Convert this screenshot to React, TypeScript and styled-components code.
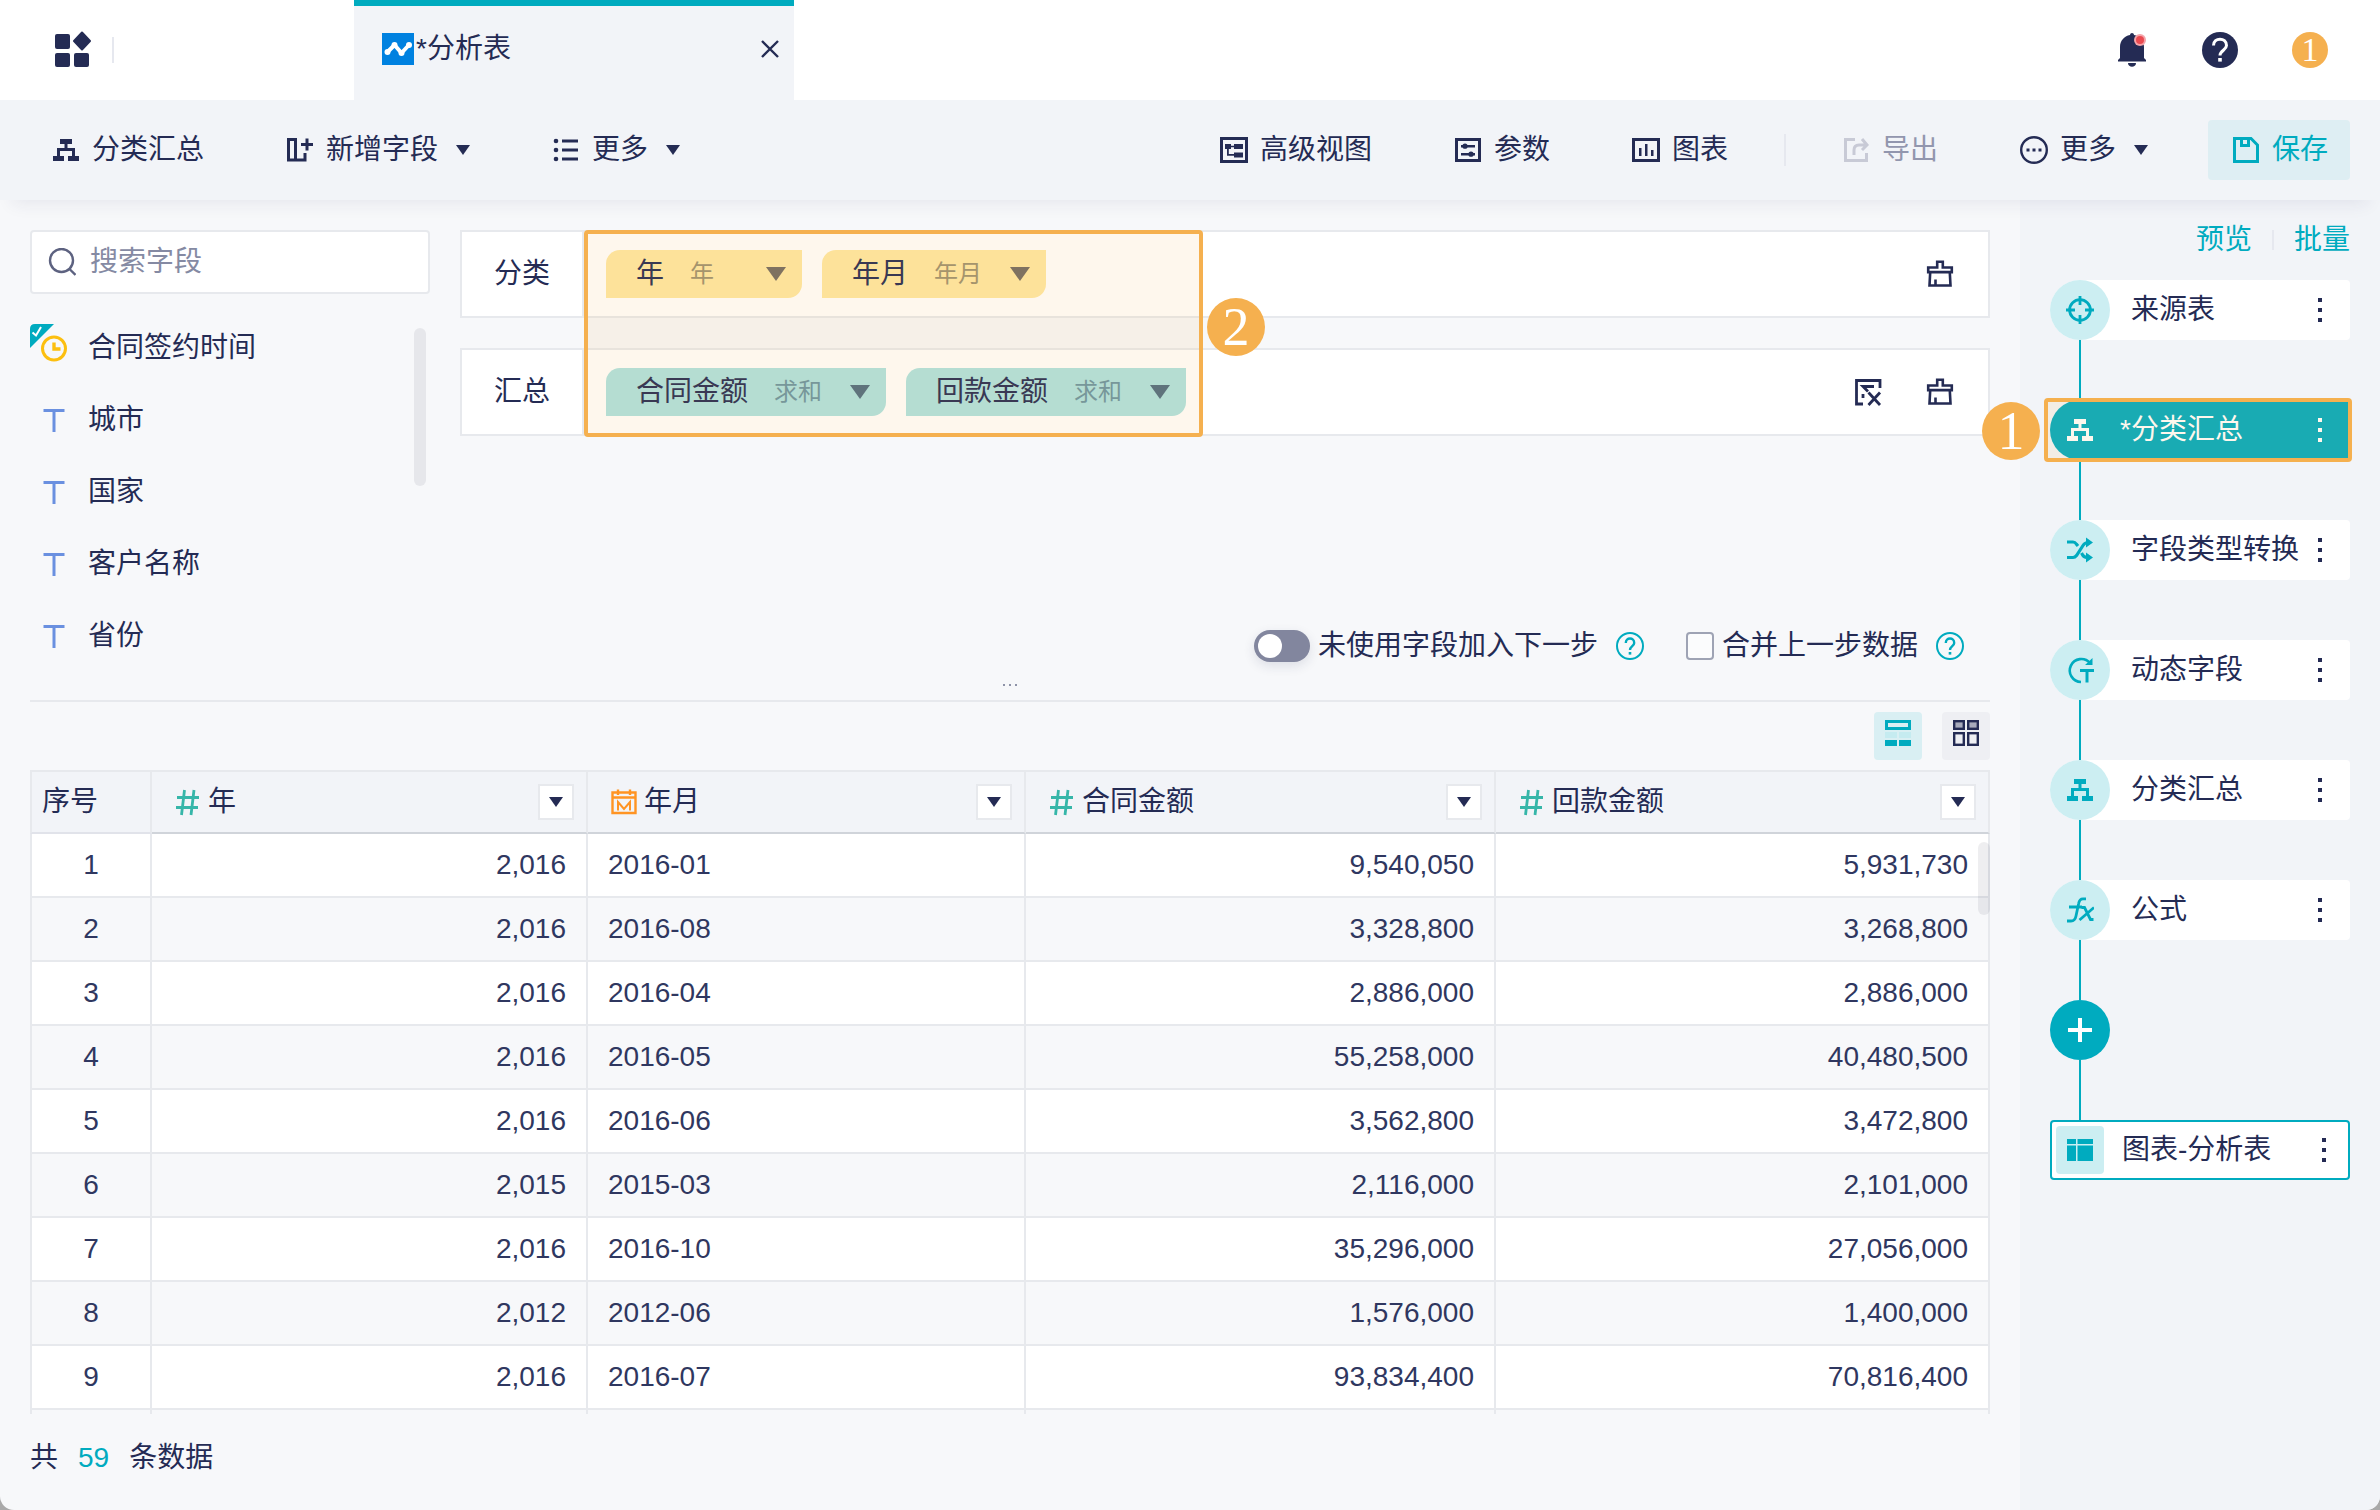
import React from 'react';
import styled, { createGlobalStyle, css } from 'styled-components';

const c = {
  ink: '#242b54',
  inkSoft: '#2f3760',
  muted: '#858aa3',
  teal: '#00abbf',
  tealPale: '#cceef2',
  tealWash: '#deeef3',
  line: '#e7e9ed',
  lineStrong: '#d0d4da',
  panel: '#f2f4f8',
  page: '#f7f8fa',
  orange: '#f5b04f',
};

const GlobalStyle = createGlobalStyle`
  *, *::before, *::after { box-sizing: border-box; }
  html, body { margin: 0; background: #a9a9a9; }
  body, button, input {
    font-family: "Liberation Sans", "Noto Sans CJK SC", sans-serif;
    font-size: 28px;
    line-height: 40px;
    font-weight: 400;
    color: ${c.ink};
  }
  button { border: 0; padding: 0; background: none; cursor: pointer; }
  svg { display: block; flex: none; }
`;

/* ---------- shell ---------- */

const Shell = styled.div`
  display: flex;
  flex-direction: column;
  height: 100vh;
  overflow: hidden;
  background: ${c.page};
  border-radius: 0 0 14px 14px;
`;

const Header = styled.header`
  display: flex;
  align-items: center;
  flex: none;
  height: 100px;
  padding: 0 52px;
  background: #fff;
`;

const HomeArea = styled.div`
  display: flex;
  align-items: center;
  gap: 20px;
  width: 302px;
`;

const Separator = styled.span<{ $height: number }>`
  flex: none;
  width: 2px;
  height: ${(p) => p.$height}px;
  background: #e6e8ef;
`;

const Tab = styled.div`
  display: flex;
  align-items: center;
  gap: 2px;
  width: 440px;
  height: 100px;
  padding: 0 14px 8px 28px;
  border-top: 6px solid ${c.teal};
  background: ${c.panel};
`;

const TabTitle = styled.span`
  flex: 1;
`;

const HeaderActions = styled.div`
  display: flex;
  align-items: center;
  gap: 54px;
  margin-left: auto;
`;

const IconButton = styled.button`
  display: flex;
  align-items: center;
  justify-content: center;
`;

const NumberBadge = styled.span<{ $size: number; $font: number }>`
  display: flex;
  align-items: center;
  justify-content: center;
  width: ${(p) => p.$size}px;
  height: ${(p) => p.$size}px;
  border-radius: 50%;
  background: ${c.orange};
  color: #fff;
  font-family: "Liberation Serif", serif;
  font-size: ${(p) => p.$font}px;
  line-height: ${(p) => p.$size}px;
`;

/* ---------- toolbar ---------- */

const Toolbar = styled.nav`
  position: relative;
  z-index: 1;
  display: flex;
  align-items: center;
  justify-content: space-between;
  flex: none;
  height: 100px;
  padding: 0 30px 0 52px;
  background: ${c.panel};
  box-shadow: 0 16px 16px -12px rgba(36, 43, 84, 0.08);
`;

const ToolGroup = styled.div`
  display: flex;
  align-items: center;
  gap: 82px;
`;

const ToolRight = styled.div`
  display: flex;
  align-items: center;
  gap: 56px;
`;

const ToolButton = styled.button<{ $disabled?: boolean }>`
  display: flex;
  align-items: center;
  gap: 12px;
  color: ${(p) => (p.$disabled ? '#9296ae' : c.ink)};
  svg { color: ${(p) => (p.$disabled ? '#c8cad6' : 'inherit')}; }
`;

const Caret = styled.span<{ $size?: 'small' | 'large'; $pushed?: boolean }>`
  flex: none;
  width: 0;
  height: 0;
  border-style: solid;
  border-color: currentColor transparent transparent;
  border-width: ${(p) => (p.$size === 'large' ? '14px 10px 0' : '10px 7px 0')};
  margin-left: ${(p) => (p.$pushed ? '6px' : '0')};
`;

const SaveButton = styled(ToolButton)`
  width: 142px;
  height: 60px;
  margin-left: 4px;
  padding-left: 24px;
  border-radius: 4px;
  background: ${c.tealWash};
  color: ${c.teal};
`;

/* ---------- workspace ---------- */

const Workspace = styled.div`
  display: flex;
  flex: 1;
  min-height: 0;
`;

const Main = styled.main`
  display: flex;
  flex-direction: column;
  flex: 1;
  min-width: 0;
  padding: 30px 30px 0;
`;

const Config = styled.section`
  display: flex;
  gap: 30px;
  height: 440px;
`;

const Fields = styled.aside`
  flex: none;
  width: 400px;
`;

const SearchBox = styled.label`
  display: flex;
  align-items: center;
  gap: 14px;
  height: 64px;
  padding: 0 16px;
  border: 2px solid ${c.line};
  border-radius: 4px;
  background: #fff;
  color: #5d6280;
`;

const SearchInput = styled.input`
  flex: 1;
  min-width: 0;
  padding: 0;
  border: 0;
  outline: 0;
  background: none;
  &::placeholder { color: ${c.muted}; opacity: 1; }
`;

const FieldList = styled.ul`
  position: relative;
  margin: 18px 0 0;
  padding: 0;
  list-style: none;
`;

const FieldItem = styled.li`
  position: relative;
  display: flex;
  align-items: center;
  gap: 10px;
  height: 72px;
`;

const UsedMark = styled.span`
  position: absolute;
  left: 0;
  top: 12px;
`;

const ScrollThumb = styled.span<{ $top: number; $height: number; $right: number }>`
  position: absolute;
  top: ${(p) => p.$top}px;
  right: ${(p) => p.$right}px;
  width: 12px;
  height: ${(p) => p.$height}px;
  border-radius: 6px;
  background: rgba(36, 43, 60, 0.08);
`;

const Grouping = styled.div`
  position: relative;
  display: flex;
  flex-direction: column;
  gap: 30px;
  flex: 1;
  min-width: 0;
`;

const GroupRow = styled.div`
  display: flex;
  height: 88px;
  border: 2px solid ${c.line};
  background: #fff;
`;

const GroupLabel = styled.span`
  display: flex;
  align-items: center;
  justify-content: center;
  width: 122px;
  border-right: 2px solid ${c.line};
`;

const Pills = styled.div`
  display: flex;
  align-items: center;
  gap: 20px;
  flex: 1;
  padding-left: 22px;
`;

const Pill = styled.button<{ $tone: 'yellow' | 'green' }>`
  display: flex;
  align-items: center;
  min-width: 196px;
  height: 48px;
  padding: 0 16px 0 30px;
  border-radius: 14px 0 14px 0;
  background: ${(p) => (p.$tone === 'yellow' ? '#fee8a3' : '#aee3e1')};
`;

const PillNote = styled.span<{ $tone: 'yellow' | 'green' }>`
  flex: 1;
  margin: 0 28px 0 26px;
  font-size: 24px;
  text-align: left;
  color: ${(p) => (p.$tone === 'yellow' ? '#9c9170' : '#6995a3')};
`;

const PillCaret = styled(Caret)<{ $tone: 'yellow' | 'green' }>`
  color: ${(p) => (p.$tone === 'yellow' ? '#726b63' : '#4e6c82')};
`;

const RowTools = styled.div`
  display: flex;
  align-items: center;
  gap: 44px;
  padding-right: 34px;
`;

const Outline = styled.div`
  position: absolute;
  border: 4px solid ${c.orange};
  border-radius: 4px;
  background: rgba(245, 176, 79, 0.1);
  pointer-events: none;
`;

const GroupOutline = styled(Outline)`
  left: 124px;
  top: 0;
  width: 619px;
  height: 207px;
`;

const GroupCallout = styled.div`
  position: absolute;
  left: 747px;
  top: 68px;
`;

const Options = styled.div`
  display: flex;
  align-items: center;
  justify-content: flex-end;
  gap: 42px;
  height: 48px;
  margin-top: auto;
  padding-right: 26px;
`;

const Option = styled.div`
  display: flex;
  align-items: center;
  gap: 18px;
`;

const OptionLabel = styled.label`
  display: flex;
  align-items: center;
  gap: 8px;
`;

const Switch = styled.input`
  appearance: none;
  width: 56px;
  height: 32px;
  margin: 0;
  padding: 4px;
  border-radius: 16px;
  background: #82869e;
  box-shadow: 0 4px 12px rgba(36, 43, 84, 0.12);
  &::before {
    content: "";
    display: block;
    width: 24px;
    height: 24px;
    border-radius: 50%;
    background: #fff;
  }
  &:checked { background: ${c.teal}; }
  &:checked::before { margin-left: 24px; }
`;

const TickBox = styled.input`
  appearance: none;
  width: 28px;
  height: 28px;
  margin: 0;
  border: 2px solid #9ea3b4;
  border-radius: 4px;
  background: #fbfcfd;
  &:checked { background: ${c.teal}; }
`;

const Splitter = styled.div`
  display: flex;
  align-items: center;
  justify-content: center;
  flex: none;
  gap: 4px;
  height: 32px;
  border-bottom: 2px solid ${c.line};
`;

const GripDot = styled.span`
  width: 2px;
  height: 2px;
  background: #8e93a8;
`;

const ViewSwitch = styled.div`
  display: flex;
  justify-content: flex-end;
  flex: none;
  gap: 20px;
  padding: 10px 0;
`;

const ViewButton = styled.button<{ $active?: boolean }>`
  display: flex;
  justify-content: center;
  width: 48px;
  height: 48px;
  padding-top: 8px;
  border-radius: 4px;
  background: ${(p) => (p.$active ? '#d9eff3' : '#eeeff3')};
  color: ${(p) => (p.$active ? c.teal : c.ink)};
`;

/* ---------- table ---------- */

const TableFrame = styled.div`
  position: relative;
  flex: 1;
  min-height: 0;
  overflow: hidden;
`;

const Table = styled.table`
  width: 100%;
  table-layout: fixed;
  border-collapse: separate;
  border-spacing: 0;
`;

const Col = styled.col<{ $width?: number }>`
  width: ${(p) => (p.$width ? `${p.$width}px` : 'auto')};
`;

const edge = css`
  border-right: 2px solid ${c.line};
  &:first-child { border-left: 2px solid ${c.line}; }
`;

const HeadCell = styled.th`
  ${edge}
  height: 64px;
  padding: 0 12px 0 22px;
  border-top: 2px solid ${c.line};
  border-bottom: 2px solid ${c.lineStrong};
  background: ${c.panel};
  font-weight: 400;
  text-align: left;
  &:first-child { padding: 0 0 0 10px; border-bottom-color: #e1e3ea; }
`;

const HeadContent = styled.div`
  display: flex;
  align-items: center;
  gap: 6px;
`;

const HeadLabel = styled.span`
  flex: 1;
`;

const FilterButton = styled.button`
  display: flex;
  align-items: center;
  justify-content: center;
  width: 36px;
  height: 36px;
  border: 2px solid ${c.line};
  background: #fff;
`;

const Row = styled.tr`
  background: #fff;
  &:nth-child(even) { background: ${c.page}; }
`;

const Cell = styled.td<{ $align: 'left' | 'center' | 'right' }>`
  ${edge}
  height: 64px;
  padding: 0 20px;
  border-bottom: 2px solid ${c.line};
  color: ${c.inkSoft};
  text-align: ${(p) => p.$align};
`;

const Footer = styled.footer`
  display: flex;
  flex: none;
  gap: 20px;
  height: 96px;
  padding-top: 24px;
`;

const Total = styled.span`
  color: ${c.teal};
`;

/* ---------- steps ---------- */

const StepPanel = styled.aside`
  flex: none;
  width: 360px;
  padding: 20px 30px 0;
  background: ${c.panel};
`;

const StepLinks = styled.div`
  display: flex;
  align-items: center;
  justify-content: flex-end;
  gap: 20px;
  height: 40px;
  margin-bottom: 20px;
`;

const StepLink = styled.a`
  color: ${c.teal};
  text-decoration: none;
`;

const StepList = styled.ol`
  margin: 0;
  padding: 0;
  list-style: none;
`;

const StepItem = styled.li`
  & + &::before {
    content: "";
    display: block;
    width: 2px;
    height: 60px;
    margin-left: 29px;
    background: ${c.teal};
  }
`;

const StepCard = styled.div<{ $active?: boolean }>`
  position: relative;
  display: flex;
  align-items: center;
  height: 60px;
  padding-right: 16px;
  border-radius: 30px 4px 4px 30px;
  background: ${(p) => (p.$active ? c.teal : '#fff')};
  color: ${(p) => (p.$active ? '#fff' : c.ink)};
`;

const StepIcon = styled.span<{ $active?: boolean }>`
  display: flex;
  align-items: center;
  justify-content: center;
  flex: none;
  width: 60px;
  height: 60px;
  border-radius: 50%;
  background: ${(p) => (p.$active ? 'none' : c.tealPale)};
  color: ${(p) => (p.$active ? '#fff' : c.teal)};
`;

const StepName = styled.span<{ $inset: number }>`
  flex: 1;
  padding-left: ${(p) => p.$inset}px;
  white-space: nowrap;
`;

const MoreButton = styled.button`
  display: flex;
  flex-direction: column;
  align-items: center;
  justify-content: center;
  gap: 6px;
  width: 28px;
  height: 40px;
  color: inherit;
`;

const MoreDot = styled.span`
  width: 4px;
  height: 4px;
  background: currentColor;
`;

const AddButton = styled.button`
  display: flex;
  align-items: center;
  justify-content: center;
  width: 60px;
  height: 60px;
  border-radius: 50%;
  background: ${c.teal};
  color: #fff;
`;

const ResultCard = styled.div`
  display: flex;
  align-items: center;
  height: 60px;
  padding: 0 10px 0 4px;
  border: 2px solid ${c.teal};
  border-radius: 4px;
  background: #fff;
`;

const ResultIcon = styled.span`
  display: flex;
  align-items: center;
  justify-content: center;
  width: 48px;
  height: 48px;
  border-radius: 4px;
  background: ${c.tealPale};
  color: ${c.teal};
`;

const StepOutline = styled(Outline)`
  inset: -2px -2px -2px -6px;
`;

const StepCallout = styled.div`
  position: absolute;
  left: -68px;
  top: 2px;
`;

/* ---------- icons ---------- */

type IconProps = { size?: number; children: React.ReactNode; stroke?: number };

const Icon = ({ size = 28, stroke = 0, children }: IconProps) => (
  <svg
    width={size}
    height={size}
    viewBox="0 0 28 28"
    fill={stroke ? 'none' : 'currentColor'}
    stroke={stroke ? 'currentColor' : 'none'}
    strokeWidth={stroke || undefined}
    aria-hidden="true"
  >
    {children}
  </svg>
);

const AppsIcon = () => (
  <svg width="40" height="40" viewBox="0 0 40 40" fill={c.ink} aria-hidden="true">
    <rect x="3" y="4" width="15" height="15" rx="2" />
    <rect x="3" y="23" width="15" height="14" rx="2" />
    <rect x="22" y="23" width="15" height="14" rx="2" />
    <path d="M30 2.500 38 11l-8 8.500-8-8.500z" stroke={c.ink} strokeWidth="2" strokeLinejoin="round" />
  </svg>
);

const ChartTabIcon = () => (
  <svg width="32" height="32" viewBox="0 0 32 32" aria-hidden="true">
    <rect width="32" height="32" fill="#0081e0" />
    <path d="M6 18.500 12.500 12l7 8L26 13" fill="none" stroke="#fff" strokeWidth="4" strokeLinejoin="round" strokeLinecap="round" />
    <circle cx="5.500" cy="19" r="3" fill="#fff" />
    <circle cx="12.500" cy="12" r="3" fill="#fff" />
    <circle cx="19.500" cy="20" r="3" fill="#fff" />
    <circle cx="27" cy="12" r="3" fill="#fff" />
  </svg>
);

const CloseIcon = () => (
  <svg width="20" height="20" viewBox="0 0 20 20" fill="none" stroke={c.ink} strokeWidth="2.400" aria-hidden="true">
    <path d="M2 2l16 16M18 2 2 18" />
  </svg>
);

const BellIcon = () => (
  <svg width="32" height="36" viewBox="0 0 32 36" aria-hidden="true">
    <path d="M14 3c0-2.700 4-2.700 4 0 6 1 10 6 10 12v11l2 2v1.500H2V28l2-2V15C4 9 8 4 14 3z" fill={c.ink} />
    <path d="M12 31h8c0 5-8 5-8 0z" fill={c.ink} />
    <circle cx="24" cy="8" r="6" fill="#f4a3a8" />
    <circle cx="24" cy="8" r="4" fill="#ea4a50" />
  </svg>
);

const HelpSolidIcon = () => (
  <svg width="36" height="36" viewBox="0 0 36 36" aria-hidden="true">
    <circle cx="18" cy="18" r="18" fill={c.ink} />
    <path d="M11.500 13.500c0-8.500 13-8.500 13 0 0 4.500-6.500 5-6.500 10" fill="none" stroke="#fff" strokeWidth="3" />
    <rect x="16.200" y="26" width="3.600" height="3.600" fill="#fff" />
  </svg>
);

const HelpIcon = () => (
  <svg width="28" height="28" viewBox="0 0 28 28" fill="none" stroke={c.teal} strokeWidth="2" aria-hidden="true">
    <circle cx="14" cy="14" r="13" />
    <path d="M9.800 11c0-6 8.400-6 8.400 0 0 3-4.200 3.400-4.200 7" strokeWidth="2.400" />
    <rect x="12.700" y="20" width="2.600" height="2.600" fill={c.teal} stroke="none" />
  </svg>
);

const SummaryIcon = () => (
  <Icon>
    <path d="M8 3h12v5h-4.500v4H23v8h4v5H16v-5h4v-5H8v5h4v5H1v-5h4v-8h7.500V8H8z" />
  </Icon>
);

const AddFieldIcon = () => (
  <Icon stroke={3}>
    <path d="M2.500 3.500h7v20.500h-7zM9.500 24H19v-7M15 8.500h12M21 2.500v12" />
  </Icon>
);

const ListIcon = () => (
  <Icon>
    <circle cx="4" cy="5" r="2.300" />
    <circle cx="4" cy="14" r="2.300" />
    <circle cx="4" cy="23" r="2.300" />
    <path d="M10 3.500h16v3H10zM10 12.500h16v3H10zM10 21.500h16v3H10z" />
  </Icon>
);

const AdvancedIcon = () => (
  <Icon>
    <path d="M0 1h28v26H0zM3 4v20h22V4z" fillRule="evenodd" />
    <path d="M5 8h6v5H5zM14 8h9v5h-9zM14 16.500h9v5h-9zM11 9.700h3v1.600h-3zM7 13h1.800v5H14v1.700H7z" />
  </Icon>
);

const ParamIcon = () => (
  <Icon>
    <path d="M1 2h26v24H1zM4 5v18h20V5z" fillRule="evenodd" />
    <path d="M7 9h14v2.400H7zM7 17h14v2.400H7z" />
    <circle cx="11" cy="10.200" r="2.600" />
    <circle cx="17" cy="18.200" r="2.600" />
  </Icon>
);

const ChartIcon = () => (
  <Icon>
    <path d="M0 2h28v24H0zM3 5v18h22V5z" fillRule="evenodd" />
    <path d="M7 12h2.500v8H7zM13 8h2.500v12H13zM19 14h2.500v6H19z" />
  </Icon>
);

const ExportIcon = () => (
  <Icon stroke={3}>
    <path d="M13 3.500H3.500v21h21V17M12 19v-5q0-5 5-5h7M20 3l5 6-5 5" />
  </Icon>
);

const EllipsisIcon = () => (
  <Icon>
    <circle cx="14" cy="14" r="12.800" fill="none" stroke="currentColor" strokeWidth="2.400" />
    <path d="M6.500 12.500h3v3h-3zM12.500 12.500h3v3h-3zM18.500 12.500h3v3h-3z" />
  </Icon>
);

const SaveIcon = () => (
  <Icon stroke={3}>
    <path d="M2.500 2.500H19l6.500 6.500v16.500h-23z" />
    <path d="M9.500 2.500v7h7v-7" />
  </Icon>
);

const SearchIcon = () => (
  <Icon stroke={2.4}>
    <circle cx="13.500" cy="12.500" r="11.500" />
    <path d="M21.500 21l6 6" />
  </Icon>
);

const TextTypeIcon = () => (
  <svg width="48" height="28" viewBox="0 0 48 28" fill="#6a90e0" aria-hidden="true">
    <path d="M13.500 3h21v3h-21zM22.500 6h3v20h-3z" />
  </svg>
);

const TimeTypeIcon = () => (
  <svg width="48" height="28" viewBox="0 0 48 28" fill="none" stroke="#fcbf0f" aria-hidden="true">
    <circle cx="24" cy="14.500" r="11.500" strokeWidth="3" />
    <path d="M24 8.500V15h6.500" strokeWidth="3.400" />
  </svg>
);

const UsedIcon = () => (
  <svg width="24" height="24" viewBox="0 0 24 24" aria-hidden="true">
    <path d="M5 0h19L0 24V5q0-5 5-5z" fill={c.teal} />
    <path d="M2.500 8.500 6 11.500l5-8.500" fill="none" stroke="#fff" strokeWidth="2" />
  </svg>
);

const BrushIcon = () => (
  <Icon stroke={2.6}>
    <path d="M11.200 7.500V1.800h5.600v5.700h9v4.600H2.200V7.500zM4.200 12.500 3.500 25.500h21l-.7-13M9.500 19.500v6" />
  </Icon>
);

const SheetRemoveIcon = () => (
  <Icon stroke={2.8}>
    <path d="M26 10V2.500H2.500v23.500H9M20 8.500H9l5 5M9 16v4M14.500 14.500 26 27M26 14.500 14.500 27" />
  </Icon>
);

const SplitViewIcon = () => (
  <svg width="26" height="28" viewBox="0 0 26 28" aria-hidden="true">
    <rect x="1.500" y="1.500" width="23" height="7" fill="none" stroke={c.teal} strokeWidth="3" />
    <path d="M0 12h12v6H0zM14 12h12v6H14z" fill="#c5ebf0" />
    <path d="M0 20h12v6H0zM14 20h12v6H14z" fill={c.teal} />
  </svg>
);

const GridViewIcon = () => (
  <svg width="26" height="28" viewBox="0 0 26 28" fill="none" stroke={c.ink} strokeWidth="2.400" aria-hidden="true">
    <rect x="1.200" y="1.200" width="9.600" height="7.600" fill="#a7aabb" />
    <rect x="15.200" y="1.200" width="9.600" height="7.600" fill="#a7aabb" />
    <rect x="1.200" y="13.200" width="9.600" height="11.600" />
    <rect x="15.200" y="13.200" width="9.600" height="11.600" />
  </svg>
);

const NumberTypeIcon = () => (
  <svg width="28" height="28" viewBox="-1 0 28 28" fill="none" stroke="#36b6a9" strokeWidth="2.800" aria-hidden="true">
    <path d="M2 9.500h22M1 19.500h22M9.500 2 6.500 27M19 2l-3 25" />
  </svg>
);

const MonthTypeIcon = () => (
  <svg width="28" height="28" viewBox="0 0 28 28" fill="none" stroke="#ff9423" strokeWidth="2.400" aria-hidden="true">
    <path d="M2.500 4.500h23v20.500h-23zM2.500 9.500h23M8 1.500V7M20 1.500V7" />
    <path d="M8 22.500v-8.500l6 7 6-7v8.500" strokeWidth="2" />
  </svg>
);

const SourceIcon = () => (
  <Icon stroke={2.8}>
    <circle cx="14" cy="14" r="10.400" />
    <path d="M14 0v9M14 19v9M0 14h9M19 14h9" />
  </Icon>
);

const ConvertIcon = () => (
  <Icon>
    <path
      d="M1 6h6q2 0 3.300 2l1.700 2M1 21.500h6q2 0 3.500-2L17 9.500Q19 6.500 22 6.500M15.500 17l1.500 2.500q1.500 2 5 2"
      fill="none"
      stroke="currentColor"
      strokeWidth="3.200"
    />
    <path d="M20 1.500 27 6.500l-7 5zM20 16.500l7 5-7 5z" />
  </Icon>
);

const DynamicIcon = () => (
  <Icon>
    <path d="M15 26A11.500 11.500 0 1 1 24 7" fill="none" stroke="currentColor" strokeWidth="2.600" />
    <path d="M26.500 2v7H19zM14 13h14v3h-5.500v10.500h-3V16H14z" />
  </Icon>
);

const FormulaIcon = () => (
  <Icon stroke={2.8}>
    <path d="M20 2.800h-3q-3.500 0-4.300 4.500L10 20q-1 5-5 5H1M3 11h13M15.500 11.500h3l6 12h3M28 11.500 13.500 24" />
  </Icon>
);

const PlusIcon = () => (
  <Icon stroke={4}>
    <path d="M14 2v24M2 14h24" />
  </Icon>
);

const TableIcon = () => (
  <Icon>
    <path d="M1 3h9v5H1zM11.500 3H27v5H11.500zM1 9.500h9V25H1zM11.500 9.500H27V25H11.500z" />
  </Icon>
);

/* ---------- data ---------- */

const fields = ['合同签约时间', '城市', '国家', '客户名称', '省份'];

const columns = [
  { name: '年', icon: <NumberTypeIcon />, align: 'right' as const },
  { name: '年月', icon: <MonthTypeIcon />, align: 'left' as const },
  { name: '合同金额', icon: <NumberTypeIcon />, align: 'right' as const },
  { name: '回款金额', icon: <NumberTypeIcon />, align: 'right' as const },
];

const rows = [
  ['2,016', '2016-01', '9,540,050', '5,931,730'],
  ['2,016', '2016-08', '3,328,800', '3,268,800'],
  ['2,016', '2016-04', '2,886,000', '2,886,000'],
  ['2,016', '2016-05', '55,258,000', '40,480,500'],
  ['2,016', '2016-06', '3,562,800', '3,472,800'],
  ['2,015', '2015-03', '2,116,000', '2,101,000'],
  ['2,016', '2016-10', '35,296,000', '27,056,000'],
  ['2,012', '2012-06', '1,576,000', '1,400,000'],
  ['2,016', '2016-07', '93,834,400', '70,816,400'],
  ['', '', '', ''],
];

const steps = [
  { name: '来源表', icon: <SourceIcon /> },
  { name: '*分类汇总', icon: <SummaryIcon />, active: true },
  { name: '字段类型转换', icon: <ConvertIcon /> },
  { name: '动态字段', icon: <DynamicIcon /> },
  { name: '分类汇总', icon: <SummaryIcon /> },
  { name: '公式', icon: <FormulaIcon /> },
];

/* ---------- parts ---------- */

const MoreMenu = () => (
  <MoreButton aria-label="更多操作">
    <MoreDot />
    <MoreDot />
    <MoreDot />
  </MoreButton>
);

const FieldPill = ({ tone, name, note }: { tone: 'yellow' | 'green'; name: string; note: string }) => (
  <Pill $tone={tone}>
    <span>{name}</span>
    <PillNote $tone={tone}>{note}</PillNote>
    <PillCaret $size="large" $tone={tone} />
  </Pill>
);

export default function App() {
  return (
    <>
      <GlobalStyle />
      <Shell>
        <Header>
          <HomeArea>
            <IconButton aria-label="首页"><AppsIcon /></IconButton>
            <Separator $height={26} />
          </HomeArea>
          <Tab>
            <ChartTabIcon />
            <TabTitle>*分析表</TabTitle>
            <IconButton aria-label="关闭"><CloseIcon /></IconButton>
          </Tab>
          <HeaderActions>
            <IconButton aria-label="通知"><BellIcon /></IconButton>
            <IconButton aria-label="帮助"><HelpSolidIcon /></IconButton>
            <NumberBadge $size={36} $font={34}>1</NumberBadge>
          </HeaderActions>
        </Header>

        <Toolbar>
          <ToolGroup>
            <ToolButton><SummaryIcon />分类汇总</ToolButton>
            <ToolButton><AddFieldIcon />新增字段<Caret $pushed /></ToolButton>
            <ToolButton><ListIcon />更多<Caret $pushed /></ToolButton>
          </ToolGroup>
          <ToolRight>
            <ToolGroup>
              <ToolButton><AdvancedIcon />高级视图</ToolButton>
              <ToolButton><ParamIcon />参数</ToolButton>
              <ToolButton><ChartIcon />图表</ToolButton>
            </ToolGroup>
            <Separator $height={32} />
            <ToolGroup>
              <ToolButton $disabled disabled><ExportIcon />导出</ToolButton>
              <ToolButton><EllipsisIcon />更多<Caret $pushed /></ToolButton>
            </ToolGroup>
            <SaveButton><SaveIcon />保存</SaveButton>
          </ToolRight>
        </Toolbar>

        <Workspace>
          <Main>
            <Config>
              <Fields>
                <SearchBox>
                  <SearchIcon />
                  <SearchInput type="text" placeholder="搜索字段" aria-label="搜索字段" />
                </SearchBox>
                <FieldList>
                  {fields.map((name, i) => (
                    <FieldItem key={name}>
                      {i === 0 && <UsedMark><UsedIcon /></UsedMark>}
                      {i === 0 ? <TimeTypeIcon /> : <TextTypeIcon />}
                      {name}
                    </FieldItem>
                  ))}
                  <ScrollThumb $top={16} $height={158} $right={4} />
                </FieldList>
              </Fields>

              <Grouping>
                <GroupRow>
                  <GroupLabel>分类</GroupLabel>
                  <Pills>
                    <FieldPill tone="yellow" name="年" note="年" />
                    <FieldPill tone="yellow" name="年月" note="年月" />
                  </Pills>
                  <RowTools>
                    <IconButton aria-label="清空"><BrushIcon /></IconButton>
                  </RowTools>
                </GroupRow>
                <GroupRow>
                  <GroupLabel>汇总</GroupLabel>
                  <Pills>
                    <FieldPill tone="green" name="合同金额" note="求和" />
                    <FieldPill tone="green" name="回款金额" note="求和" />
                  </Pills>
                  <RowTools>
                    <IconButton aria-label="移除"><SheetRemoveIcon /></IconButton>
                    <IconButton aria-label="清空"><BrushIcon /></IconButton>
                  </RowTools>
                </GroupRow>
                <Options>
                  <Option>
                    <OptionLabel>
                      <Switch type="checkbox" role="switch" />
                      未使用字段加入下一步
                    </OptionLabel>
                    <IconButton aria-label="说明"><HelpIcon /></IconButton>
                  </Option>
                  <Option>
                    <OptionLabel>
                      <TickBox type="checkbox" />
                      合并上一步数据
                    </OptionLabel>
                    <IconButton aria-label="说明"><HelpIcon /></IconButton>
                  </Option>
                </Options>
                <GroupOutline />
                <GroupCallout><NumberBadge $size={58} $font={54}>2</NumberBadge></GroupCallout>
              </Grouping>
            </Config>

            <Splitter>
              <GripDot />
              <GripDot />
              <GripDot />
            </Splitter>

            <ViewSwitch>
              <ViewButton $active aria-label="分栏视图"><SplitViewIcon /></ViewButton>
              <ViewButton aria-label="网格视图"><GridViewIcon /></ViewButton>
            </ViewSwitch>

            <TableFrame>
              <Table>
                <colgroup>
                  <Col $width={122} />
                  <Col $width={436} />
                  <Col $width={438} />
                  <Col $width={470} />
                  <Col />
                </colgroup>
                <thead>
                  <tr>
                    <HeadCell>序号</HeadCell>
                    {columns.map((col) => (
                      <HeadCell key={col.name}>
                        <HeadContent>
                          {col.icon}
                          <HeadLabel>{col.name}</HeadLabel>
                          <FilterButton aria-label="筛选"><Caret /></FilterButton>
                        </HeadContent>
                      </HeadCell>
                    ))}
                  </tr>
                </thead>
                <tbody>
                  {rows.map((row, i) => (
                    <Row key={i}>
                      <Cell $align="center">{row[0] && i + 1}</Cell>
                      {row.map((value, j) => (
                        <Cell key={j} $align={columns[j].align}>{value}</Cell>
                      ))}
                    </Row>
                  ))}
                </tbody>
              </Table>
              <ScrollThumb $top={72} $height={73} $right={0} />
            </TableFrame>

            <Footer>
              <span>共</span>
              <Total>59</Total>
              <span>条数据</span>
            </Footer>
          </Main>

          <StepPanel>
            <StepLinks>
              <StepLink href="#preview">预览</StepLink>
              <Separator $height={20} />
              <StepLink href="#batch">批量</StepLink>
            </StepLinks>
            <StepList>
              {steps.map((step, i) => (
                <StepItem key={i}>
                  <StepCard $active={step.active}>
                    <StepIcon $active={step.active}>{step.icon}</StepIcon>
                    <StepName $inset={step.active ? 10 : 21}>{step.name}</StepName>
                    <MoreMenu />
                    {step.active && <StepOutline />}
                    {step.active && (
                      <StepCallout><NumberBadge $size={58} $font={54}>1</NumberBadge></StepCallout>
                    )}
                  </StepCard>
                </StepItem>
              ))}
              <StepItem>
                <AddButton aria-label="添加步骤"><PlusIcon /></AddButton>
              </StepItem>
              <StepItem>
                <ResultCard>
                  <ResultIcon><TableIcon /></ResultIcon>
                  <StepName $inset={18}>图表-分析表</StepName>
                  <MoreMenu />
                </ResultCard>
              </StepItem>
            </StepList>
          </StepPanel>
        </Workspace>
      </Shell>
    </>
  );
}
